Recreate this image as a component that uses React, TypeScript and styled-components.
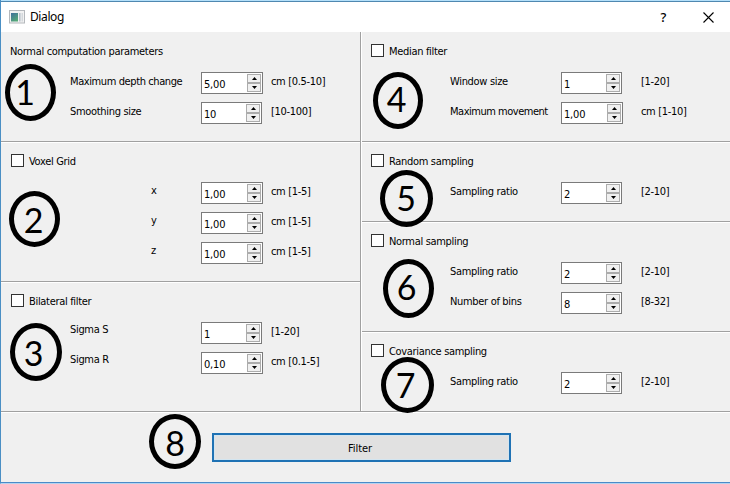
import React from "react";
import styled, { createGlobalStyle } from "styled-components";

const GlobalStyle = createGlobalStyle`
  *, *::before, *::after { box-sizing: border-box; }
  body { margin: 0; background: #f0f0f0; }
`;

const Window = styled.div`
  position: relative;
  display: flex;
  flex-direction: column;
  width: 730px;
  height: 484px;
  overflow: hidden;
  background: #f0f0f0;
  border-left: 1px solid #4a8fc4;
  border-bottom: 1px solid #b5d3ee;
  box-shadow: inset 0 -1px #4a8ac8;
  font: 11px/14px "DejaVu Sans Condensed", "DejaVu Sans", sans-serif;
  font-stretch: condensed;
  letter-spacing: -0.32px;
  color: #000;
  white-space: nowrap;
`;

const TitleBar = styled.header`
  display: flex;
  align-items: center;
  height: 32px;
  flex: none;
  padding: 1px 16px 0 8px;
  background: #fff;
  border-top: 1px solid #b4e0fa;
  box-shadow: inset 0 1px #4f88b0;
`;

const WindowTitle = styled.h1`
  flex: 1;
  margin: 0 0 0 5px;
  font: 12px/16px "Noto Sans", sans-serif;
  letter-spacing: -0.4px;
`;

const HelpGlyph = styled.span`
  margin-right: 37px;
  font: 500 13px/16px "Noto Sans", sans-serif;
`;

const Columns = styled.main`
  display: flex;
  height: 379px;
  flex: none;
`;

const Column = styled.div<{ $divided?: boolean }>`
  width: ${(p) => (p.$divided ? "361px" : "auto")};
  flex: ${(p) => (p.$divided ? "none" : "1")};
  border-right: ${(p) => (p.$divided ? "1px solid #fff" : "none")};
  box-shadow: ${(p) => (p.$divided ? "inset -1px 0 #a0a0a0" : "none")};
  padding-right: ${(p) => (p.$divided ? "1px" : "0")};
`;

const Section = styled.section<{ $height: number; $first?: boolean }>`
  height: ${(p) => p.$height}px;
  padding-top: 12px;
  border-top: ${(p) => (p.$first ? "none" : "1px solid #a0a0a0")};
  box-shadow: ${(p) => (p.$first ? "none" : "inset 0 1px #fff")};
`;

const SectionHeader = styled.label<{ $inset: number }>`
  display: flex;
  align-items: center;
  gap: 5px;
  height: 13px;
  margin-bottom: 15px;
  padding-left: ${(p) => p.$inset}px;
`;

const SectionTitle = styled.span`
  padding-top: 2px;
`;

const Checkbox = styled.span`
  width: 13px;
  height: 13px;
  background: #fff;
  border: 1px solid #333;
`;

const Fields = styled.div`
  display: flex;
  flex-direction: column;
  gap: 8px;
`;

const Field = styled.div<{ $label: number; $spin: number; $unit: number }>`
  display: grid;
  grid-template-columns: ${(p) => `${p.$spin - p.$label}px ${p.$unit - p.$spin}px 1fr`};
  height: 22px;
  padding-left: ${(p) => p.$label}px;
`;

const FieldText = styled.span<{ $lift?: number; $tracking?: number }>`
  line-height: ${(p) => 20 - 2 * (p.$lift ?? 0)}px;
  letter-spacing: ${(p) => p.$tracking ?? -0.32}px;
`;

const SpinBox = styled.span<{ $decimal: boolean }>`
  display: flex;
  align-items: center;
  justify-content: space-between;
  width: ${(p) => (p.$decimal ? 62 : 61)}px;
  height: 22px;
  padding: 1px 1px 1px 2px;
  background: #fff;
  border: 1px solid #7a7a7a;
`;

const SpinValue = styled.span`
  padding-top: 4px;
  letter-spacing: -0.2px;
`;

const Stepper = styled.span`
  display: grid;
  grid-template-rows: 9px 9px;
  width: 14px;
  height: 18px;
`;

const Step = styled.span`
  display: grid;
  place-items: center;
  background: #f0f0f0;
  border: 1px solid #acacac;
`;

const Footer = styled.footer`
  flex: 1;
  padding: 21px 0 0 211px;
  border-top: 1px solid #a0a0a0;
  box-shadow: inset 0 1px #fff;
`;

const FilterButton = styled.button`
  display: block;
  width: 299px;
  height: 29px;
  padding: 2px 3px 0 0;
  font: inherit;
  letter-spacing: -0.1px;
  color: #000;
  background: #e1e1e1;
  border: 2px solid #1f72b4;
  border-radius: 0;
  box-shadow: inset 0 0 0 1px #d3e5f0;
`;

const Ring = styled.div<{ $x: number; $y: number; $w: number; $h: number }>`
  position: absolute;
  left: ${(p) => p.$x - 1}px;
  top: ${(p) => p.$y}px;
  width: ${(p) => p.$w}px;
  height: ${(p) => p.$h}px;
  border: 5px solid #000;
  border-radius: 50%;
`;

const Digit = styled.span<{ $x: number; $y: number }>`
  position: absolute;
  left: ${(p) => p.$x - 16}px;
  top: ${(p) => p.$y - 21}px;
  width: 30px;
  text-align: center;
  font: 34px/40px Lato, sans-serif;
  letter-spacing: 0;
`;

const AppIcon = () => (
  <svg width="16" height="14" viewBox="0 0 16 14">
    <defs>
      <linearGradient id="pane" x1="0" y1="0" x2="0.6" y2="1">
        <stop offset="0" stopColor="#3f6f9c" />
        <stop offset="1" stopColor="#55a878" />
      </linearGradient>
    </defs>
    <rect x="0.5" y="0.5" width="15" height="12.5" fill="#f2f2f2" stroke="#b4b8bc" />
    <rect x="2" y="3" width="7" height="8.5" fill="url(#pane)" />
    <rect x="10" y="3" width="1.6" height="8.5" fill="#b9c3cc" />
    <rect x="12.5" y="3" width="1.5" height="8.5" fill="#d3d8dc" />
  </svg>
);

const CloseIcon = () => (
  <svg width="11" height="11" viewBox="0 0 11 11">
    <path d="M0.5 0.5 L10.5 10.5 M10.5 0.5 L0.5 10.5" stroke="#000" strokeWidth="1.1" />
  </svg>
);

const Arrow = ({ down }: { down?: boolean }) => (
  <svg width="5" height="3" viewBox="0 0 5 3">
    <path d={down ? "M0 0 H5 L2.5 3 Z" : "M0 3 H5 L2.5 0 Z"} fill="#000" />
  </svg>
);

type FieldSpec = { label: string; value: string; unit: string; lift?: number; tracking?: number };
type SectionSpec = {
  title: string;
  height: number;
  plain?: boolean;
  labelX: number;
  spinX: number;
  unitX: number;
  fields: FieldSpec[];
};

const left: SectionSpec[] = [
  {
    title: "Normal computation parameters", height: 109, plain: true, labelX: 69, spinX: 200, unitX: 270,
    fields: [
      { label: "Maximum depth change", value: "5,00", unit: "cm [0.5-10]", tracking: -0.4 },
      { label: "Smoothing size", value: "10", unit: "[10-100]" },
    ],
  },
  {
    title: "Voxel Grid", height: 140, labelX: 150, spinX: 200, unitX: 270,
    fields: [
      { label: "x", value: "1,00", unit: "cm [1-5]", lift: 1 },
      { label: "y", value: "1,00", unit: "cm [1-5]", lift: 1 },
      { label: "z", value: "1,00", unit: "cm [1-5]", lift: 1 },
    ],
  },
  {
    title: "Bilateral filter", height: 130, labelX: 69, spinX: 200, unitX: 270,
    fields: [
      { label: "Sigma S", value: "1", unit: "[1-20]", lift: 2 },
      { label: "Sigma R", value: "0,10", unit: "cm [0.1-5]", lift: 2 },
    ],
  },
];

const rightX = { labelX: 88, spinX: 199, unitX: 279 };

const right: SectionSpec[] = [
  {
    title: "Median filter", height: 109, ...rightX,
    fields: [
      { label: "Window size", value: "1", unit: "[1-20]" },
      { label: "Maximum movement", value: "1,00", unit: "cm [1-10]", tracking: -0.48 },
    ],
  },
  { title: "Random sampling", height: 80, ...rightX, fields: [{ label: "Sampling ratio", value: "2", unit: "[2-10]" }] },
  {
    title: "Normal sampling", height: 110, ...rightX,
    fields: [
      { label: "Sampling ratio", value: "2", unit: "[2-10]" },
      { label: "Number of bins", value: "8", unit: "[8-32]" },
    ],
  },
  { title: "Covariance sampling", height: 80, ...rightX, fields: [{ label: "Sampling ratio", value: "2", unit: "[2-10]" }] },
];

const markers = [
  { x: 5, y: 64, w: 51, h: 57, dx: 25, dy: 93 },
  { x: 9, y: 191, w: 51, h: 56, dx: 33.5, dy: 220.5 },
  { x: 10, y: 323, w: 52, h: 58, dx: 33.5, dy: 353.5 },
  { x: 373, y: 72, w: 50, h: 57, dx: 396.5, dy: 99.5 },
  { x: 380, y: 170, w: 53, h: 57, dx: 406, dy: 199 },
  { x: 383, y: 259, w: 51, h: 59, dx: 406.5, dy: 288 },
  { x: 381, y: 357, w: 53, h: 56, dx: 405.5, dy: 385.5 },
  { x: 149, y: 414, w: 52, h: 55, dx: 175, dy: 443.5 },
];

const Group = ({ spec, first }: { spec: SectionSpec; first: boolean }) => (
  <Section $height={spec.height} $first={first}>
    <SectionHeader $inset={spec.plain || spec.labelX === 88 ? 9 : 10}>
      {!spec.plain && <Checkbox />}
      <SectionTitle>{spec.title}</SectionTitle>
    </SectionHeader>
    <Fields>
      {spec.fields.map((f) => (
        <Field key={f.label} $label={spec.labelX} $spin={spec.spinX} $unit={spec.unitX}>
          <FieldText $lift={f.lift} $tracking={f.tracking}>{f.label}</FieldText>
          <SpinBox $decimal={f.value.includes(",")}>
            <SpinValue>{f.value}</SpinValue>
            <Stepper>
              <Step><Arrow /></Step>
              <Step><Arrow down /></Step>
            </Stepper>
          </SpinBox>
          <FieldText>{f.unit}</FieldText>
        </Field>
      ))}
    </Fields>
  </Section>
);

export default function App() {
  return (
    <>
      <GlobalStyle />
      <Window>
        <TitleBar>
          <AppIcon />
          <WindowTitle>Dialog</WindowTitle>
          <HelpGlyph>?</HelpGlyph>
          <CloseIcon />
        </TitleBar>
        <Columns>
          <Column $divided>
            {left.map((s, i) => <Group key={s.title} spec={s} first={i === 0} />)}
          </Column>
          <Column>
            {right.map((s, i) => <Group key={s.title} spec={s} first={i === 0} />)}
          </Column>
        </Columns>
        <Footer>
          <FilterButton>Filter</FilterButton>
        </Footer>
        {markers.map((m, i) => (
          <React.Fragment key={i}>
            <Ring $x={m.x} $y={m.y} $w={m.w} $h={m.h} />
            <Digit $x={m.dx} $y={m.dy}>{i + 1}</Digit>
          </React.Fragment>
        ))}
      </Window>
    </>
  );
}
